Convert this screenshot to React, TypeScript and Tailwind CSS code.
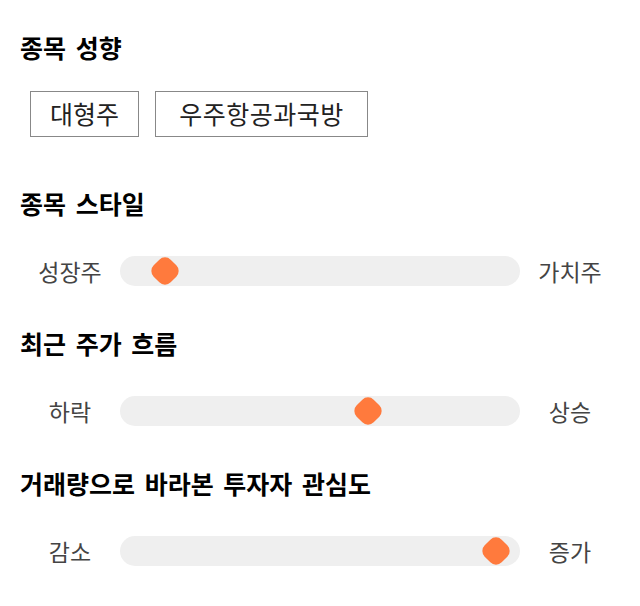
const font = { fontFamily: '"Noto Sans CJK KR", "Noto Sans", sans-serif' }

type SliderProps = {
  left: string
  right: string
  pos: number
}

function StyleSlider({ left, right, pos }: SliderProps) {
  return (
    <div className="flex items-center h-[46px]">
      <div className="w-[100px] text-center text-[23px] text-[#444]">{left}</div>
      <div className="relative flex-1 h-[30px] rounded-full bg-[#efefef]">
        <div
          className="absolute top-1/2 w-6 h-6 -translate-x-1/2 -translate-y-1/2 rotate-45 rounded-[8px] bg-[#ff7a3d]"
          style={{ left: `${pos}px` }}
        />
      </div>
      <div className="w-[100px] text-center text-[23px] text-[#444]">{right}</div>
    </div>
  )
}

export default function App() {
  return (
    <div className="w-[640px] h-[606px] bg-white px-5 pt-8" style={font}>
      <h2 className="text-[25px] leading-[30px] font-bold text-black [word-spacing:4px]">종목 성향</h2>
      <div className="flex gap-4 ml-[10px] mt-[29px]">
        <div className="w-[109px] h-[46px] flex items-center justify-center border border-[#888] text-[25px] text-[#222]">대형주</div>
        <div className="w-[213px] h-[46px] flex items-center justify-center border border-[#888] text-[25px] text-[#222] tracking-[0.5px]">우주항공과국방</div>
      </div>

      <h2 className="mt-[51px] text-[25px] leading-[30px] font-bold text-black [word-spacing:4px]">종목 스타일</h2>
      <div className="mt-[30px]">
        <StyleSlider left="성장주" right="가치주" pos={45} />
      </div>

      <h2 className="mt-[34px] text-[25px] leading-[30px] font-bold text-black [word-spacing:4px]">최근 주가 흐름</h2>
      <div className="mt-[30px]">
        <StyleSlider left="하락" right="상승" pos={248} />
      </div>

      <h2 className="mt-[34px] text-[25px] leading-[30px] font-bold text-black [word-spacing:4px]">거래량으로 바라본 투자자 관심도</h2>
      <div className="mt-[30px]">
        <StyleSlider left="감소" right="증가" pos={376} />
      </div>
    </div>
  )
}
